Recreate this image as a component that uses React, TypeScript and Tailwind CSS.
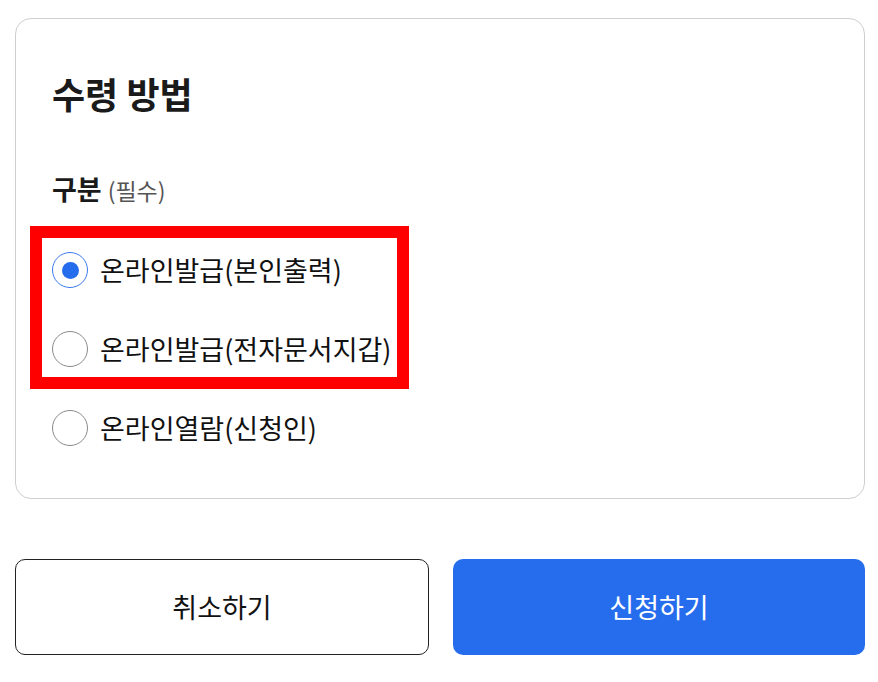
import { useState } from "react";

const options = [
  "온라인발급(본인출력)",
  "온라인발급(전자문서지갑)",
  "온라인열람(신청인)",
];

function Radio({ checked }: { checked: boolean }) {
  return (
    <span
      className={
        checked
          ? "flex h-[36px] w-[36px] shrink-0 items-center justify-center rounded-full border border-[#3b7be9] bg-white"
          : "flex h-[36px] w-[36px] shrink-0 items-center justify-center rounded-full border border-[#8a8a8a] bg-white"
      }
    >
      {checked && <span className="h-[17px] w-[17px] rounded-full bg-[#266ded]" />}
    </span>
  );
}

export default function App() {
  const [selected, setSelected] = useState(0);

  return (
    <div
      className="min-h-screen bg-white pt-[18px] pr-[13px] pl-[15px] text-[#111]"
      style={{ fontFamily: '"Noto Sans CJK KR", "Noto Sans", sans-serif' }}
    >
      <div className="relative rounded-[16px] border border-[#cfcfcf] px-[36px] pt-[52px] pb-[52px]">
        <h2 className="text-[36px] leading-[44px] font-bold text-[#1a1a1a]">수령 방법</h2>

        <div className="mt-[57px] flex h-[34px] items-baseline gap-[6px]">
          <span className="text-[27px] leading-[34px] font-bold text-[#1a1a1a]">구분</span>
          <span className="text-[23px] leading-[34px] text-[#555]">(필수)</span>
        </div>

        <div className="mt-[46px] flex flex-col gap-[43px]">
          {options.map((label, i) => (
            <label
              key={label}
              className="flex cursor-pointer items-center gap-[12px]"
              onClick={() => setSelected(i)}
            >
              <Radio checked={selected === i} />
              <span className="text-[27px] leading-[36px] text-[#111]">{label}</span>
            </label>
          ))}
        </div>

        {/* annotation box over the first two options */}
        <div className="pointer-events-none absolute top-[207px] left-[14px] h-[163px] w-[379px] border-[12px] border-[#ff0000]" />
      </div>

      <div className="mt-[60px] flex gap-[24px]">
        <button className="h-[96px] flex-1 rounded-[10px] border border-[#222] bg-white text-[27px] text-[#111]">
          취소하기
        </button>
        <button className="h-[96px] flex-1 rounded-[10px] bg-[#266ded] text-[27px] text-white">
          신청하기
        </button>
      </div>
    </div>
  );
}
